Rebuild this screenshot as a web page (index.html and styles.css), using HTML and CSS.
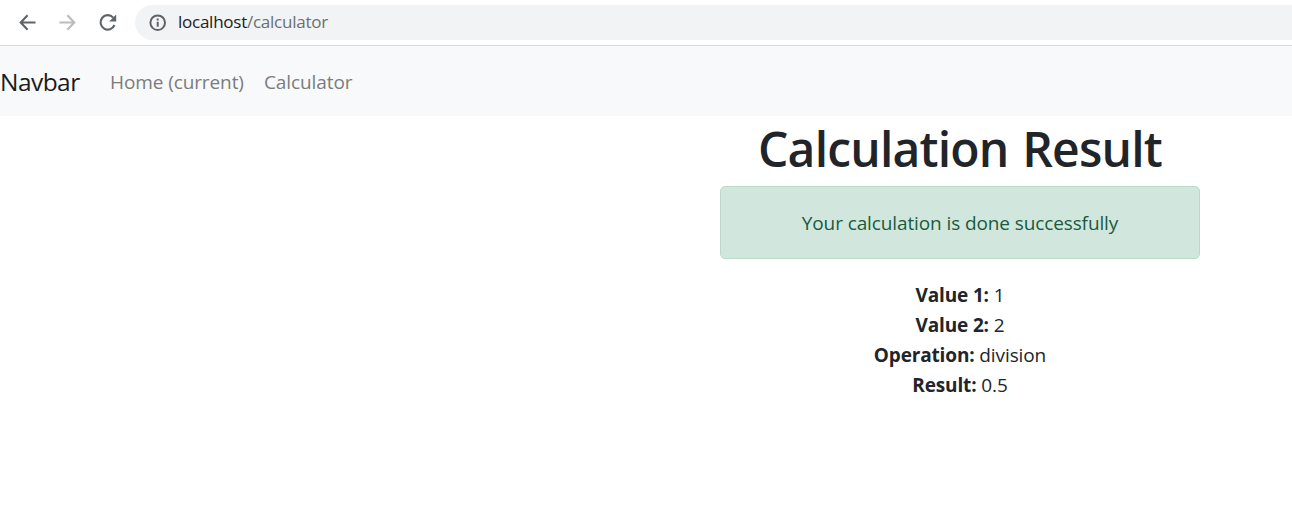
FILE: index.html
```html
<!DOCTYPE html>
<html lang="en">
<head>
<meta charset="utf-8">
<title>Calculation Result</title>
<link rel="stylesheet" href="styles.css">
</head>
<body>
<header class="browser-bar">
  <svg class="nav-icon" viewBox="0 0 22 22" fill="none" stroke="#5f6368" stroke-width="2.1"><path d="M18.5 10.5H4M10.6 3.2L3.7 10.5l6.9 7.3"/></svg>
  <svg class="nav-icon" viewBox="0 0 22 22" fill="none" stroke="#babcbe" stroke-width="2.1"><path d="M2.5 10.5H17M10.4 3.2l6.9 7.3-6.9 7.3"/></svg>
  <svg class="nav-icon" viewBox="0 0 22 22"><path d="M16.2 5.6A7.2 7.2 0 1 0 17.5 13" fill="none" stroke="#5f6368" stroke-width="2.1"/><path d="M19.2 2.6v7h-7z" fill="#5f6368"/></svg>
  <div class="address">
    <svg class="info-icon" viewBox="0 0 18 18" fill="none" stroke="#5f6368" stroke-width="2"><circle cx="8.7" cy="8.7" r="7.3"/><path d="M8.7 7.8v5M8.7 4.6v2"/></svg>
    <span class="url"><span class="host">localhost</span>/calculator</span>
  </div>
</header>
<nav class="navbar">
  <a class="brand">Navbar</a>
  <a class="link home">Home (current)</a>
  <a class="link">Calculator</a>
</nav>
<main class="result">
  <h1 class="title">Calculation <span class="title-end">Result</span></h1>
  <div class="alert">Your calculation is done successfully</div>
  <div class="row"><b>Value 1:</b> 1</div>
  <div class="row"><b>Value 2:</b> 2</div>
  <div class="row"><b>Operation:</b> division</div>
  <div class="row"><b>Result:</b> 0.5</div>
</main>
</body>
</html>
```
FILE: styles.css
```css
* { box-sizing: border-box; }
body { margin: 0; background: #fff; color: #212529; font-family: "Open Sans", "Noto Sans", sans-serif; font-size: 19px; font-weight: 400; line-height: 30px; overflow: hidden; }
.browser-bar { height: 46px; display: flex; align-items: center; padding-left: 17px; border-bottom: 1px solid #dadce0; }
.nav-icon { width: 22px; height: 22px; flex: none; margin-right: 18px; }
.address { flex: 1; height: 35px; border-radius: 18px 0 0 18px; background: #f1f3f4; display: flex; align-items: center; padding-left: 14px; margin-left: -2px; }
.info-icon { width: 18px; height: 18px; margin-right: 11px; }
.url { color: #6b6f73; font-size: 17px; letter-spacing: -0.25px; white-space: nowrap; margin-top: -2px; }
.host { color: #202124; }
.navbar { height: 70px; background: #f8f9fa; display: flex; align-items: center; white-space: nowrap; padding-top: 2px; }
.brand { width: 110px; font-size: 24.5px; letter-spacing: -0.55px; color: #1b1c1c; margin-top: -1px; }
.link { font-size: 19px; letter-spacing: -0.1px; color: #7b7c7c; }
.home { width: 154px; }
.result { width: 480px; margin-left: 720px; text-align: center; }
.title { margin: 2px 0 8px; height: 60px; line-height: 61px; font-size: 48px; font-weight: 600; letter-spacing: -0.8px; white-space: nowrap; }
.title-end { margin-left: 2px; }
.alert { height: 73px; line-height: 72px; border: 1px solid #badbcc; border-radius: 5px; background: #d1e7dd; color: #1b5a3e; margin-bottom: 21px; letter-spacing: -0.11px; }
.row { letter-spacing: -0.1px; }
b { font-weight: 700; letter-spacing: -0.15px; }
```
